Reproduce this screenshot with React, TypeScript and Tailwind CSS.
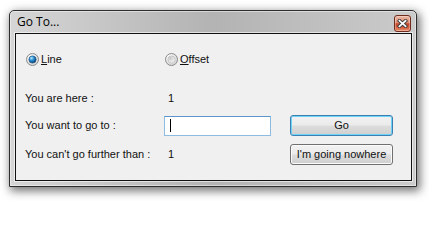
import React from "react";

const LABEL = "text-[11px] leading-[13px] text-[#111]";

function Radio({ checked, id }: { checked: boolean; id: string }) {
  return (
    <svg width="13" height="13" viewBox="0 0 13 13" className="shrink-0">
      <defs>
        <radialGradient id={`${id}-ring`} cx="0.35" cy="0.3" r="0.8">
          <stop offset="0" stopColor="#ffffff" />
          <stop offset="1" stopColor="#cfcfcf" />
        </radialGradient>
        <radialGradient id={`${id}-dot`} cx="0.35" cy="0.3" r="0.75">
          {checked ? (
            <>
              <stop offset="0" stopColor="#b6ecff" />
              <stop offset="0.45" stopColor="#2a8fd6" />
              <stop offset="1" stopColor="#0d3b66" />
            </>
          ) : (
            <>
              <stop offset="0" stopColor="#c9c9c9" />
              <stop offset="1" stopColor="#f7f7f7" />
            </>
          )}
        </radialGradient>
      </defs>
      <circle cx="6.5" cy="6.5" r="6" fill={`url(#${id}-ring)`} stroke="#8b8b8b" strokeWidth="1" />
      <circle cx="6.5" cy="6.5" r="3.6" fill={`url(#${id}-dot)`} stroke={checked ? "#1b527f" : "#b9b9b9"} strokeWidth="0.7" />
    </svg>
  );
}

function CloseButton() {
  return (
    <div className="w-[17px] h-[17px] rounded-[3px] border border-[#6f2c1c] bg-[linear-gradient(180deg,#ecb7a5_0%,#de8c70_45%,#c8462a_52%,#d45a3b_75%,#e99270_100%)] shadow-[inset_0_0_0_1px_rgba(255,255,255,0.3)] flex items-center justify-center">
      <svg width="11" height="9" viewBox="0 0 11 9">
        <path d="M2.5 1.8 L8.5 7.2 M8.5 1.8 L2.5 7.2" stroke="#3a3a3a" strokeWidth="3.6" strokeLinecap="square" />
        <path d="M2.5 1.8 L8.5 7.2 M8.5 1.8 L2.5 7.2" stroke="#ffffff" strokeWidth="1.8" strokeLinecap="square" />
      </svg>
    </div>
  );
}

function Win7Button({ label, focused }: { label: string; focused?: boolean }) {
  return (
    <button
      className={
        "ml-[19px] w-[103px] h-[21px] rounded-[3px] border bg-[linear-gradient(180deg,#f2f2f2_0%,#ebebeb_48%,#dddddd_52%,#cfcfcf_100%)] text-[11px] text-[#111] flex items-center justify-center " +
        (focused
          ? "border-[#3c7fb1] shadow-[inset_0_0_0_1px_#6fd3f7]"
          : "border-[#707070] shadow-[inset_0_0_0_1px_#fbfbfb]")
      }
    >
      {label}
    </button>
  );
}

export default function App() {
  return (
    <div className="w-[429px] h-[201px] bg-white pl-[9px] pt-[10px] font-['Liberation_Sans',Arial,sans-serif]">
      <div className="w-[408px] h-[177px] flex flex-col rounded-t-[5px] border border-[#2e2e2e] bg-[linear-gradient(90deg,#d6d6d6,#b3b3b3_50%,#cbcbcb)] shadow-[2px_3px_10px_1px_rgba(0,0,0,0.55),inset_0_0_0_1px_rgba(255,255,255,0.45)]">
        {/* title bar */}
        <div className="h-[22px] flex items-start justify-between pl-[7px] pr-[5px]">
          <span className="mt-[3px] text-[12px] leading-[16px] text-black font-['Open_Sans','Noto_Sans',sans-serif]">Go To...</span>
          <div className="mt-[4px]">
            <CloseButton />
          </div>
        </div>

        {/* client area */}
        <div className="h-[148px] ml-[5px] mr-[4px] border border-[#111] bg-[#f0f0f0] shadow-[0_0_0_1px_rgba(255,255,255,0.6)] flex flex-col pt-[19px] pl-[9px]">
          <div className="h-[13px] flex items-center">
            <div className="ml-[1px] w-[139px] flex items-center gap-[2px]">
              <Radio checked id="r-line" />
              <span className={LABEL}>
                <u className="underline-offset-1">L</u>ine
              </span>
            </div>
            <div className="flex items-center gap-[2px]">
              <Radio checked={false} id="r-offset" />
              <span className={LABEL}>
                <u className="underline-offset-1">O</u>ffset
              </span>
            </div>
          </div>

          <div className="mt-[22px] h-[21px] flex items-center">
            <span className={`${LABEL} w-[139px]`}>You are here :</span>
            <span className={`${LABEL} pl-[4px]`}>1</span>
          </div>

          <div className="mt-[6px] h-[21px] flex items-center">
            <span className={`${LABEL} w-[139px]`}>
              You want to <u className="underline-offset-1">g</u>o to :
            </span>
            <div className="w-[107px] h-[20px] border border-[#8dbbe2] border-t-[#5b95c9] bg-white flex items-center pl-[5px]">
              <span className="w-px h-[13px] bg-black" />
            </div>
            <Win7Button label="Go" focused />
          </div>

          <div className="mt-[8px] h-[21px] flex items-center">
            <span className={`${LABEL} w-[139px]`}>You can't go further than :</span>
            <span className={`${LABEL} pl-[4px] w-[107px]`}>1</span>
            <Win7Button label="I'm going nowhere" />
          </div>
        </div>
      </div>
    </div>
  );
}
